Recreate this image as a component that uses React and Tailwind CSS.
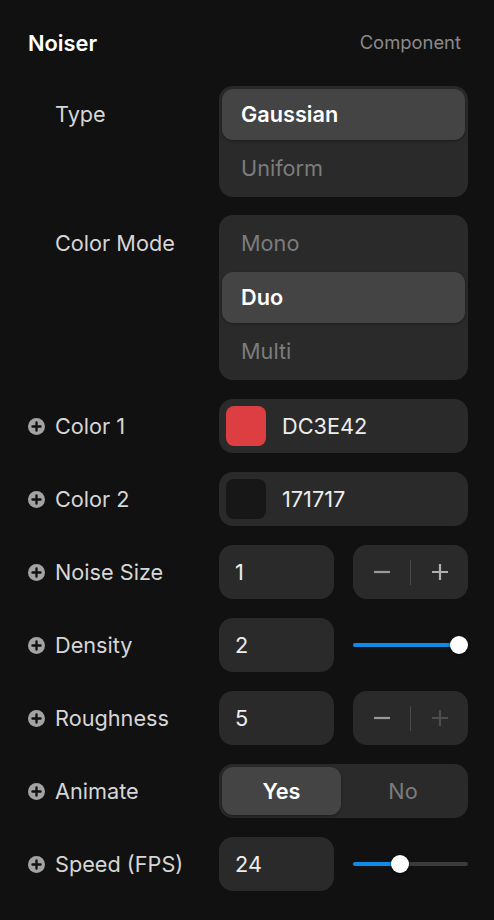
import React from "react";

const font = { fontFamily: "Inter, 'Noto Sans', sans-serif" };

function PlusIcon() {
    return (
        <svg width="17" height="17" viewBox="0 0 16 16" className="shrink-0">
            <circle cx="8" cy="8" r="8" fill="#a3a3a3" />
            <path d="M8 4.2v7.6M4.2 8h7.6" stroke="#111111" strokeWidth="2.2" strokeLinecap="round" />
        </svg>
    );
}

function Label({ children, icon }) {
    return (
        <div className="flex items-center h-[54px] w-[191px] shrink-0">
            {icon ? (
                <div className="w-[27px] flex items-center">
                    <PlusIcon />
                </div>
            ) : (
                <div className="w-[27px]" />
            )}
            <span className="text-[21.7px] text-[#d6d6d6]">{children}</span>
        </div>
    );
}

function VerticalSegment({ options, active }) {
    return (
        <div className="flex-1 flex flex-col gap-[3px] p-[3px] rounded-[14px] bg-[#2a2a2a]">
            {options.map((o) =>
                o === active ? (
                    <div
                        key={o}
                        className="h-[51px] flex items-center px-[19px] rounded-[11px] bg-[#444444] text-white font-semibold text-[21.7px] shadow-[0_1px_3px_rgba(0,0,0,0.35)]"
                    >
                        {o}
                    </div>
                ) : (
                    <div key={o} className="h-[51px] flex items-center px-[19px] text-[#7c7c7c] text-[21.7px]">
                        {o}
                    </div>
                )
            )}
        </div>
    );
}

function ColorField({ color, hex }) {
    return (
        <div className="flex-1 h-[54px] flex items-center gap-4 p-[7px] rounded-[14px] bg-[#2a2a2a]">
            <div className="w-[40px] h-[40px] rounded-[8px]" style={{ backgroundColor: color }} />
            <span className="text-[21.7px] text-[#ededed]">{hex}</span>
        </div>
    );
}

function NumberBox({ value }) {
    return (
        <div className="w-[115px] h-[54px] flex items-center px-[16px] rounded-[14px] bg-[#2a2a2a] text-[21.7px] text-[#ededed]">
            {value}
        </div>
    );
}

function Stepper({ plusDim }) {
    return (
        <div className="flex-1 h-[54px] flex items-center rounded-[14px] bg-[#2a2a2a]">
            <div className="flex-1 flex items-center justify-center">
                <svg width="18" height="18" viewBox="0 0 18 18">
                    <path d="M1 9h16" stroke="#9a9a9a" strokeWidth="2.2" />
                </svg>
            </div>
            <div className="w-px h-[25px] bg-[#4a4a4a]" />
            <div className="flex-1 flex items-center justify-center">
                <svg width="18" height="18" viewBox="0 0 18 18">
                    <path d="M1 9h16M9 1v16" stroke={plusDim ? "#4e4e4e" : "#b0b0b0"} strokeWidth="2.2" />
                </svg>
            </div>
        </div>
    );
}

function Slider({ pct }) {
    return (
        <div className="flex-1 h-[54px] flex items-center">
            <div className="relative w-full h-[4px] rounded-full bg-[#3b3b3b]">
                <div className="absolute left-0 top-0 h-full rounded-full bg-[#0f8ae6]" style={{ width: pct + "%" }} />
                <div
                    className="absolute top-1/2 w-[18px] h-[18px] -mt-[9px] -ml-[9px] rounded-full bg-white shadow-[0_1px_3px_rgba(0,0,0,0.5)]"
                    style={{ left: pct + "%" }}
                />
            </div>
        </div>
    );
}

function Row({ label, icon = true, children }) {
    return (
        <div className="flex items-center">
            <Label icon={icon}>{label}</Label>
            <div className="flex-1 flex items-center gap-[19px]">{children}</div>
        </div>
    );
}

export default function App() {
    return (
        <div className="min-h-screen bg-[#111111] pl-[28px] pr-[26px] pt-[26px]" style={font}>
            <div className="flex items-center justify-between h-[34px] mb-[26px] pr-[7px]">
                <span className="text-[21.8px] font-semibold text-white">Noiser</span>
                <span className="text-[18.4px] text-[#8a8a8a]">Component</span>
            </div>

            <div className="flex flex-col gap-[19px]">
                <div className="flex items-start">
                    <div className="pt-px">
                        <Label icon={false}>Type</Label>
                    </div>
                    <VerticalSegment options={["Gaussian", "Uniform"]} active="Gaussian" />
                </div>

                <div className="flex items-start -mt-px">
                    <div className="pt-px">
                        <Label icon={false}>Color Mode</Label>
                    </div>
                    <VerticalSegment options={["Mono", "Duo", "Multi"]} active="Duo" />
                </div>

                <Row label="Color 1">
                    <ColorField color="#DC3E42" hex="DC3E42" />
                </Row>

                <Row label="Color 2">
                    <ColorField color="#171717" hex="171717" />
                </Row>

                <Row label="Noise Size">
                    <NumberBox value="1" />
                    <Stepper />
                </Row>

                <Row label="Density">
                    <NumberBox value="2" />
                    <Slider pct={92} />
                </Row>

                <Row label="Roughness">
                    <NumberBox value="5" />
                    <Stepper plusDim />
                </Row>

                <Row label="Animate">
                    <div className="flex-1 h-[54px] flex p-[3px] rounded-[14px] bg-[#2a2a2a]">
                        <div className="w-[119px] flex items-center justify-center rounded-[11px] bg-[#444444] text-white font-semibold text-[21.7px] shadow-[0_1px_3px_rgba(0,0,0,0.35)]">
                            Yes
                        </div>
                        <div className="flex-1 flex items-center justify-center text-[#7c7c7c] text-[21.7px]">
                            No
                        </div>
                    </div>
                </Row>

                <Row label="Speed (FPS)">
                    <NumberBox value="24" />
                    <Slider pct={41} />
                </Row>
            </div>
        </div>
    );
}
